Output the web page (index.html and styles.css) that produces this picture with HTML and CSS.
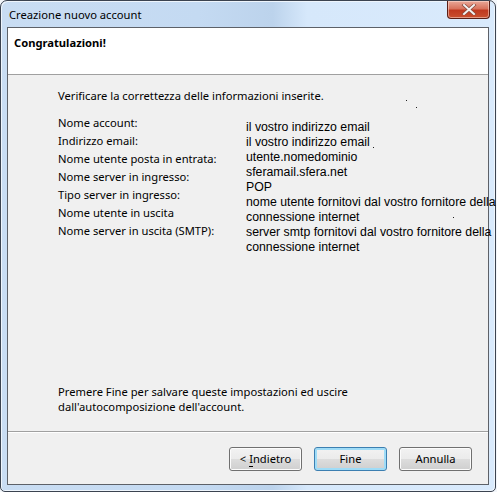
FILE: index.html
```html
<!DOCTYPE html>
<html lang="it">
<head>
  <meta charset="UTF-8" />
  <title>Creazione nuovo account</title>
  <link rel="stylesheet" href="styles.css">
</head>
<body>
  <div class="finestra">
    <div class="titolo">
      <span class="titolo-testo">Creazione nuovo account</span>
      <button class="chiudi" aria-label="Chiudi">
        <svg width="16" height="11" viewBox="0 0 16 11">
          <path d="M3 1 L13 10 M13 1 L3 10" stroke="#8a4a3c" stroke-width="3.4" stroke-linecap="square" />
          <path d="M3 1 L13 10 M13 1 L3 10" stroke="#f2f2f2" stroke-width="2" stroke-linecap="square" />
        </svg>
      </button>
    </div>
    <div class="cliente">
      <div class="intestazione">Congratulazioni!</div>
      <div class="corpo">
        <p class="intro">Verificare la correttezza delle informazioni inserite.</p>
        <div class="riepilogo">
          <ul class="etichette">
            <li>Nome account:</li>
            <li>Indirizzo email:</li>
            <li>Nome utente posta in entrata:</li>
            <li>Nome server in ingresso:</li>
            <li>Tipo server in ingresso:</li>
            <li>Nome utente in uscita</li>
            <li>Nome server in uscita (SMTP):</li>
          </ul>
          <ul class="valori">
            <li>il vostro indirizzo email</li>
            <li>il vostro indirizzo email</li>
            <li>utente.nomedominio</li>
            <li>sferamail.sfera.net</li>
            <li>POP</li>
            <li>nome utente fornitovi dal vostro fornitore della</li>
            <li>connessione internet</li>
            <li>server smtp fornitovi dal vostro fornitore della</li>
            <li>connessione internet</li>
          </ul>
        </div>
        <p class="nota">Premere Fine per salvare queste impostazioni ed uscire<br>dall'autocomposizione dell'account.</p>
        <span class="punto" style="left: 398px; top: 25px;"></span>
        <span class="punto" style="left: 408px; top: 32px;"></span>
        <span class="punto" style="left: 365px; top: 72px;"></span>
        <span class="punto" style="left: 445px; top: 142px;"></span>
      </div>
      <div class="pulsanti">
        <button class="pulsante">&lt; <u>I</u>ndietro</button>
        <button class="pulsante predefinito">Fine</button>
        <button class="pulsante">Annulla</button>
      </div>
    </div>
  </div>
</body>
</html>
```

FILE: styles.css
```css
body {
  margin: 0;
  background: #f3f6fa;
  font-family: "Noto Sans", "Open Sans", sans-serif;
  font-size: 11.2px;
  color: #000;
}
.finestra {
  width: 496px;
  height: 492px;
  border: 1px solid #3b4350;
  border-radius: 7px 7px 5px 5px;
  background: linear-gradient(90deg, #c9ddf3 0%, #c4daf2 40%, #bcd3ec 55%, #d6e8fb 62%, #d9eafc 100%);
  padding: 0 6px 6px 6px;
  box-sizing: border-box;
  display: flex;
  flex-direction: column;
  box-shadow: inset 1px 1px 0 #eef5fc, inset -1px -1px 0 #eef5fc;
}
.titolo {
  height: 26px;
  display: flex;
  align-items: flex-start;
  justify-content: space-between;
}
.titolo-testo {
  padding: 7px 0 0 2px;
  line-height: 14px;
}
.chiudi {
  width: 43px;
  height: 18px;
  margin: 0 -1px 0 0;
  border: 1px solid #5a1f16;
  border-top: none;
  border-radius: 0 0 4px 4px;
  background: linear-gradient(#e9a898 0%, #d8735d 45%, #c0391f 55%, #c9502f 100%);
  box-shadow: inset 0 0 0 1px rgba(255, 230, 220, 0.5);
  display: flex;
  align-items: center;
  justify-content: center;
  padding: 0;
}
.cliente {
  flex: 1;
  border: 1px solid #5d6168;
  background: #f0f0f0;
  display: flex;
  flex-direction: column;
}
.intestazione {
  height: 47px;
  background: #fff;
  border-bottom: 1px solid #a0a0a0;
  font-weight: bold;
  padding: 8px 0 0 6px;
  box-sizing: border-box;
  line-height: 14px;
}
.corpo {
  flex: 1;
  position: relative;
  padding: 0 0 0 50px;
  border-bottom: 1px solid #a0a0a0;
  box-shadow: 0 1px 0 #fff;
}
.intro {
  margin: 14px 0 0;
  line-height: 14px;
}
.riepilogo {
  display: flex;
  margin-top: 13px;
}
ul {
  list-style: none;
  margin: 0;
  padding: 0;
}
.etichette {
  width: 188px;
  flex-shrink: 0;
}
.etichette li {
  height: 18px;
  line-height: 14px;
}
.valori {
  font-family: "Liberation Sans", Arial, sans-serif;
  font-size: 12.3px;
  margin: 4px 0 0 0;
  white-space: nowrap;
}
.valori li {
  height: 15px;
  line-height: 14px;
}
.nota {
  position: absolute;
  left: 50px;
  top: 309px;
  margin: 0;
  line-height: 15px;
}
.punto {
  position: absolute;
  width: 1px;
  height: 1px;
  background: #222;
}
.pulsanti {
  height: 52px;
  display: flex;
  justify-content: flex-end;
  align-items: flex-start;
  gap: 12px;
  padding: 15px 16px 0 0;
  box-sizing: border-box;
}
.pulsante {
  width: 73px;
  height: 24px;
  border: 1px solid #707070;
  border-radius: 3px;
  background: linear-gradient(#f2f2f2 0%, #ebebeb 49%, #dddddd 50%, #cfcfcf 100%);
  box-shadow: inset 0 0 0 1px #fcfcfc;
  font-family: "Noto Sans", "Open Sans", sans-serif;
  font-size: 11.2px;
  color: #000;
  padding: 0;
  line-height: 14px;
}
.pulsante u {
  text-decoration: none;
  border-bottom: 1px solid #000;
}
.predefinito {
  border-color: #3c7fb1;
  box-shadow: inset 0 0 0 2px #9fdcf7;
}
```
